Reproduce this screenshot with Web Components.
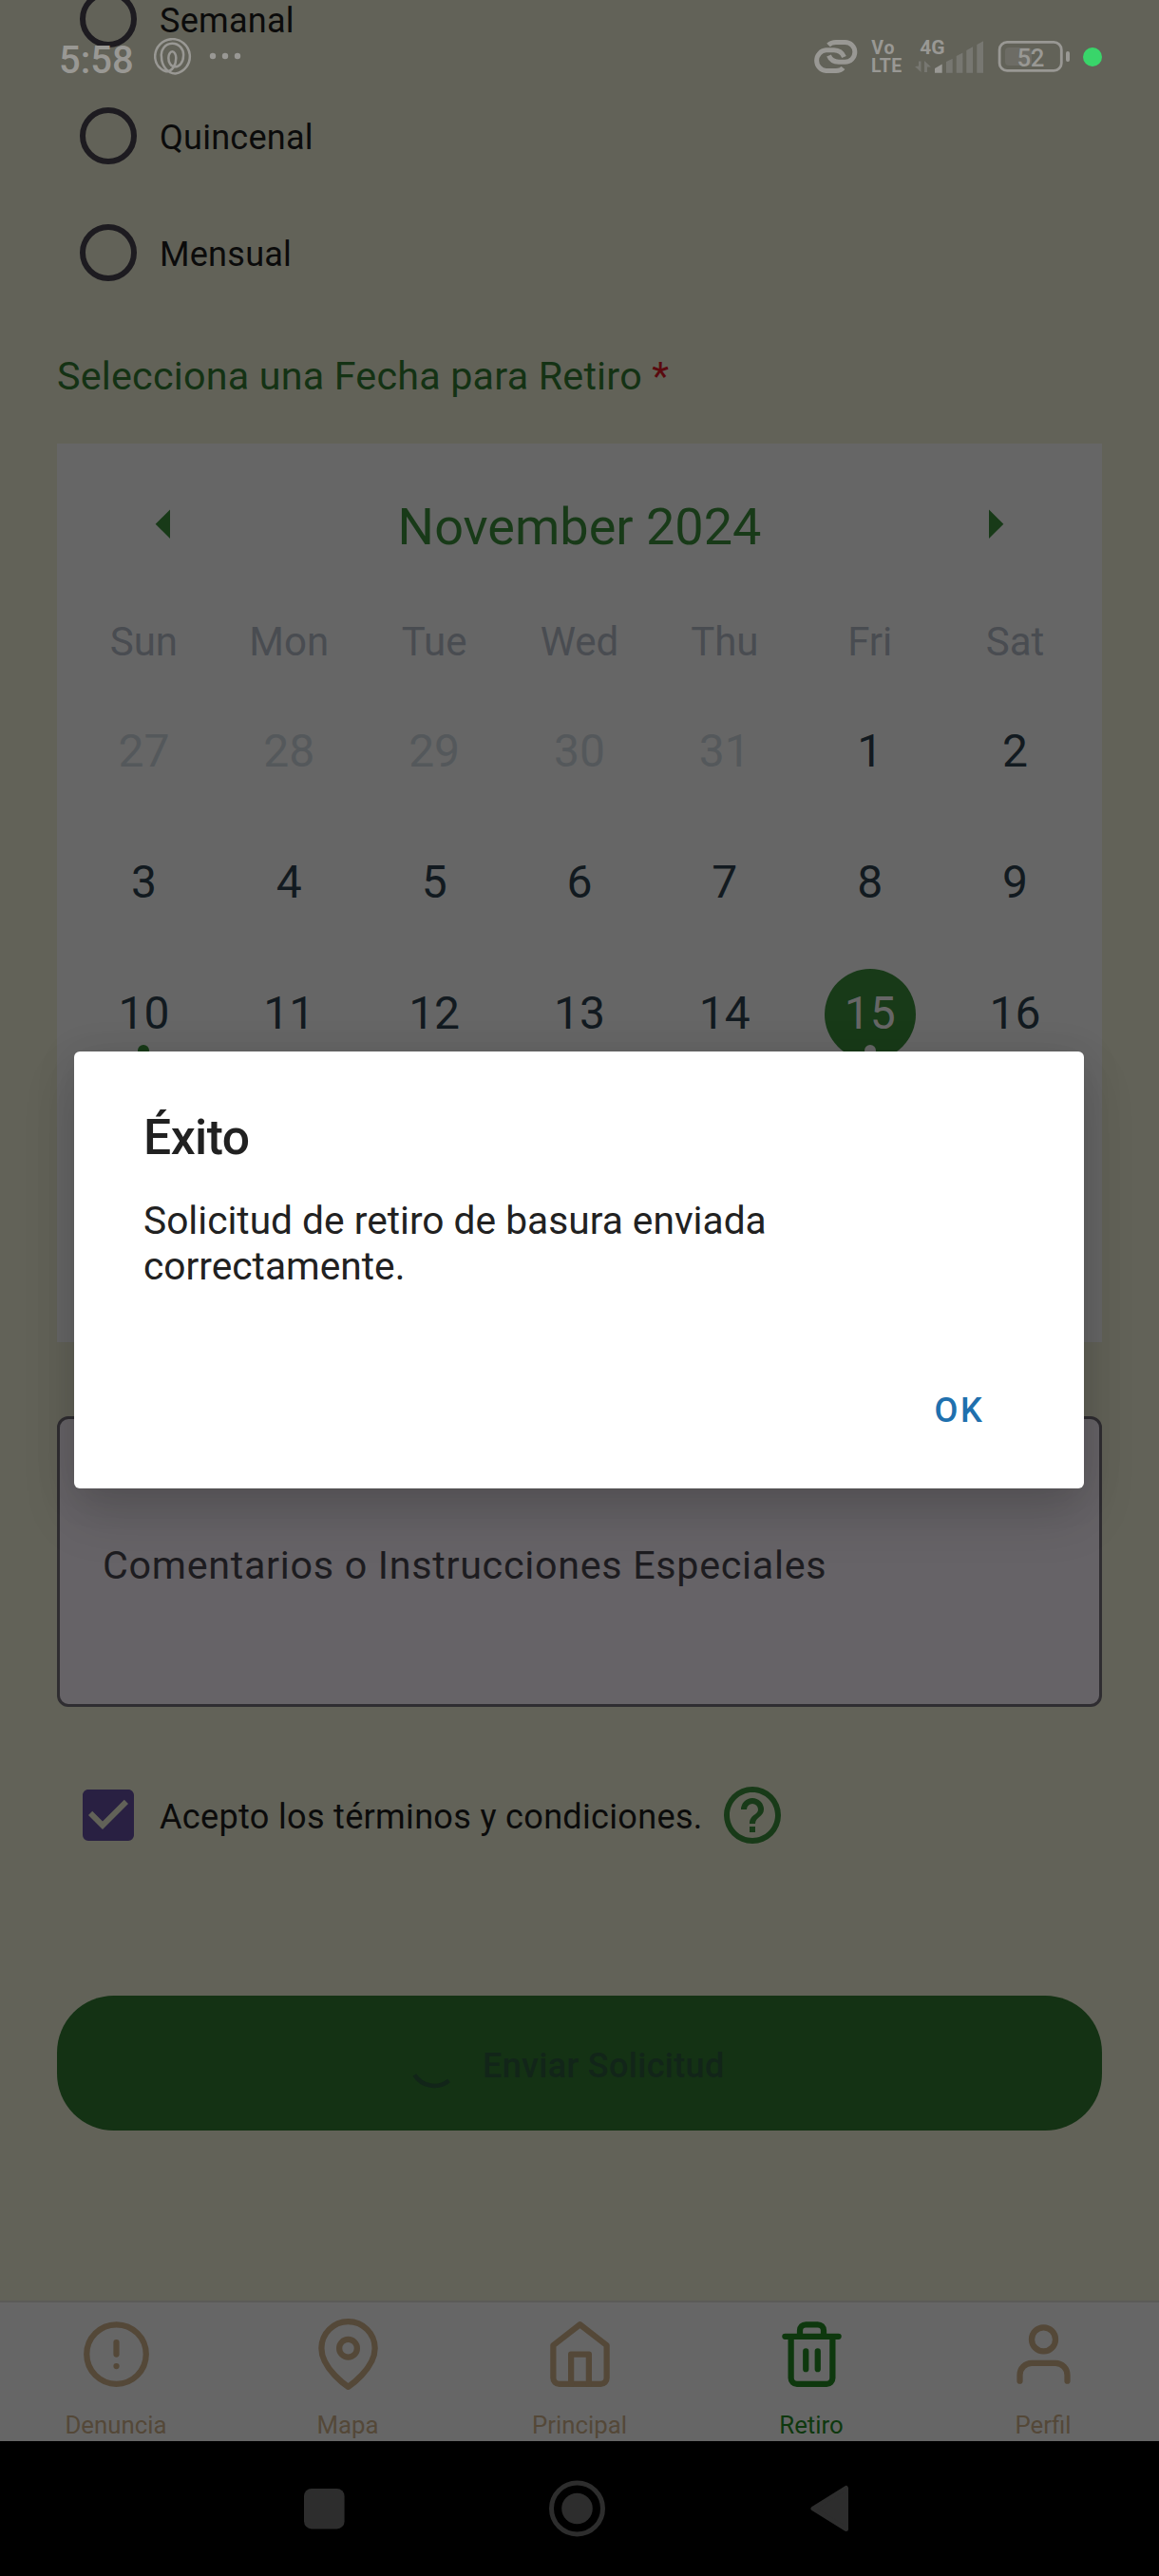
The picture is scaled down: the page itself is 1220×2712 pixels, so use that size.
<!DOCTYPE html>
<html lang="es">
<head>
<meta charset="utf-8">
<title>Retiro</title>
<style>
html,body{margin:0;padding:0}
body{width:1220px;height:2712px;overflow:hidden;background:#626258;font-family:Roboto,"Noto Sans",sans-serif}
</style>
</head>
<body>
<app-screen></app-screen>
<script>
const define = (name, css, html) => customElements.define(name, class extends HTMLElement {
  connectedCallback() {
    if (this.shadowRoot) return;
    const body = typeof html === 'function' ? html(this) : html;
    this.attachShadow({mode: 'open'}).innerHTML = `<style>*{box-sizing:border-box}svg{display:block;flex:none}${css}</style>${body}`;
  }
});

/* Frequency option */
define('radio-option', `
:host{display:flex;align-items:flex-start;height:123px;padding:31px 0 0 24px;color:#0b0b0b}
i{width:60px;height:60px;border:6px solid #1d1b20;border-radius:50%;flex:none}
span{margin:10px 0 0 24px;font-size:36.12px;line-height:44px;letter-spacing:.22px;white-space:nowrap}`,
`<i></i><span><slot></slot></span>`);

define('field-heading', `
:host{display:block;margin-top:43px;height:50px;line-height:50px;font-size:41.28px;letter-spacing:.2px;color:#143214;white-space:nowrap}
b{font-weight:400;color:#5a0a0f}`,
`<slot></slot> <b>*</b>`);

/* One calendar day */
define('cal-day', `
:host{display:flex;justify-content:center;height:96px;color:#121a20}
:host([out]){color:#54585b}
div{position:relative;width:96px;height:96px;border-radius:50%;font-size:48px;line-height:93px;text-align:center}
:host([selected]) div{background:#183a18;color:#666}
i{position:absolute;left:42px;top:80px;width:12px;height:12px;border-radius:50%;background:#183a18;display:none}
:host([dot]) i{display:block}
:host([selected]) i{background:#666}`,
`<div><slot></slot><i></i></div>`);

define('month-calendar', `
:host{display:block;margin-top:46px;height:946px;padding:0 15px;background:#666}
header{display:flex;justify-content:space-between;align-items:flex-start;padding:56px 88px 0;height:184px;color:#183a18}
header svg{margin-top:13px}
h2{margin:0;font-size:54px;line-height:64px;font-weight:400}
.g{display:grid;grid-template-columns:repeat(7,1fr)}
.w{font-size:42px;line-height:50px;text-align:center;color:#494c51}
.d{margin-top:43px;row-gap:42px}`,
() => {
  const names = ['Sun','Mon','Tue','Wed','Thu','Fri','Sat'];
  const days = [27,28,29,30,31,1,2,3,4,5,6,7,8,9,10,11,12,13,14,15,16];
  return `<header><svg width="17" height="32" viewBox="0 0 17 32"><path d="M16 .5V31L.7 15.8z" fill="currentColor"/></svg>
<h2>November 2024</h2>
<svg width="17" height="32" viewBox="0 0 17 32"><path d="M1 .5V31L16.3 15.8z" fill="currentColor"/></svg></header>
<div class="g">${names.map(n => `<span class="w">${n}</span>`).join('')}</div>
<div class="g d">${days.map(n => `<cal-day${n>20?' out':''}${n===15?' selected dot':''}${n===10?' dot':''}>${n}</cal-day>`).join('')}</div>`;
});

define('comment-box', `
:host{display:block;margin-top:78px;height:306px;padding:129px 45px 0;border:3px solid #2f2d31;border-radius:12px;background:#666367;color:#1d1c20;font-size:41.28px;line-height:50px;letter-spacing:.7px;white-space:nowrap}`,
`<slot></slot>`);

define('terms-row', `
:host{display:flex;align-items:flex-start;margin-top:78px;height:72px;padding-left:18px}
span{margin:16px 16px 0 18px;font-size:36.12px;line-height:44px;letter-spacing:.29px;color:#0b0b0b;white-space:nowrap}`,
`<svg width="72" height="72" viewBox="0 0 24 24"><path fill="#292042" d="M10,17L5,12L6.41,10.58L10,14.17L17.59,6.58L19,8M19,3H5C3.89,3 3,3.89 3,5V19A2,2 0 0,0 5,21H19A2,2 0 0,0 21,19V5C21,3.89 20.1,3 19,3Z"/></svg>
<span><slot></slot></span>
<svg width="72" height="72" viewBox="0 0 24 24"><path fill="#183a18" d="M11,18H13V16H11V18M12,2A10,10 0 0,0 2,12A10,10 0 0,0 12,22A10,10 0 0,0 22,12A10,10 0 0,0 12,2M12,20C7.59,20 4,16.41 4,12C4,7.59 7.59,4 12,4C16.41,4 20,7.59 20,12C20,16.41 16.41,20 12,20M12,6A4,4 0 0,0 8,10H10A2,2 0 0,1 12,8A2,2 0 0,1 14,10C14,12 11,11.75 11,15H13C13,12.75 16,12.5 16,10A4,4 0 0,0 12,6Z"/></svg>`);

define('submit-button', `
:host{display:flex;align-items:center;margin-top:154px;height:142px;padding-left:370px;border-radius:60px;background:#143214;color:#122519}
span{margin:5px 0 0 24px;font-size:36.12px;line-height:44px;font-weight:500;letter-spacing:.28px;white-space:nowrap}`,
`<svg width="54" height="54" viewBox="0 0 54 54"><path d="M6.400 39.500A24.500 24.500 0 0 0 42.500 45.500" fill="none" stroke="currentColor" stroke-width="4.600"/></svg><span><slot></slot></span>`);

/* Bottom tabs */
const tabIcons = {
  alert: '<circle cx="12" cy="12" r="10"/><path d="M12 8v4M12 16h.01"/>',
  pin: '<path d="M21 10c0 7-9 13-9 13s-9-6-9-13a9 9 0 0 1 18 0z"/><circle cx="12" cy="10" r="3"/>',
  home: '<path d="M3 9l9-7 9 7v11a2 2 0 0 1-2 2H5a2 2 0 0 1-2-2z"/><path d="M9 22V12h6v10"/>',
  trash: '<path d="M3 6h18M19 6v14a2 2 0 0 1-2 2H7a2 2 0 0 1-2-2V6m3 0V4a2 2 0 0 1 2-2h4a2 2 0 0 1 2 2v2M10 11v6M14 11v6"/>',
  user: '<path d="M20 21v-2a4 4 0 0 0-4-4H8a4 4 0 0 0-4 4v2"/><circle cx="12" cy="7" r="4"/>'
};
define('tab-item', `
:host{flex:1;display:flex;flex-direction:column;align-items:center;padding-top:17px;color:#544838}
:host([active]){color:#0e380e}
span{margin-top:22px;font-size:25.8px;line-height:30px}`,
el => `<svg width="75" height="75" viewBox="0 0 24 24" fill="none" stroke="currentColor" stroke-width="2" stroke-linecap="round" stroke-linejoin="round">${tabIcons[el.getAttribute('icon')]}</svg><span><slot></slot></span>`);
define('tab-bar', `:host{display:flex;height:148px;border-top:2px solid #5b5b58;background:#666;flex:none}`, `<slot></slot>`);

define('system-nav', `
:host{display:flex;height:142px;flex:none;background:#000;align-items:center;padding-left:320px;color:#2d2d2d}
svg+svg{margin-left:215px}`,
`<svg width="43" height="43" viewBox="0 0 43 43"><rect width="42.6" height="42.4" rx="8" fill="currentColor"/></svg>
<svg width="60" height="60" viewBox="0 0 60 60" fill="currentColor"><circle cx="29.5" cy="30" r="27" fill="none" stroke="currentColor" stroke-width="5"/><circle cx="29.5" cy="30" r="16.3"/></svg>
<svg width="42" height="50" viewBox="0 0 42 50"><path d="M3 25L37.500 3.500V46.500Z" fill="currentColor" stroke="currentColor" stroke-width="5" stroke-linejoin="round"/></svg>`);

define('status-bar', `
:host{position:absolute;left:0;top:0;width:1220px;height:120px;display:flex;align-items:center;color:#999894;padding-left:62px}
.t{font-size:40px;font-weight:500;line-height:48px;margin-top:7px;width:100px;white-space:nowrap}
.r{margin-left:auto}
text{font-family:Roboto,sans-serif;fill:currentColor}`,
`<span class="t">5:58</span>
<svg width="100" height="40" viewBox="162 40 100 40"><g transform="translate(150 30) scale(.3333)" fill="none" stroke="currentColor" stroke-width="7.500"><path d="M75 136C54 130 39.500 112 39.500 88A55 55 0 1 1 104 142.500C80 143 60 118 60 90A35 36 0 1 1 129 88C129 108 115 121 103 121C88 121 82 105 82 93A12 20 0 1 1 106 93C106 114 95 136 75 136Z"/></g><g fill="currentColor"><circle cx="224" cy="59" r="3.200"/><circle cx="237" cy="59" r="3.200"/><circle cx="250" cy="59" r="3.200"/></g></svg>
<svg class="r" width="364" height="60" viewBox="856 30 364 60">
<g fill="none" stroke="currentColor" stroke-width="5"><path d="M872 47.500Q875 44.500 880 44.500H889.500A10.300 10.300 0 0 1 889.500 65.200H883Q875 65 872.500 58.500"/><path d="M887.500 71.500Q885 74.500 880 74.500H869.500A10.900 10.900 0 0 1 869.500 52.800H878Q885.500 53 888.500 60"/></g>
<g font-weight="700"><text x="917.300" y="57.200" font-size="19.500" letter-spacing="1">Vo</text><text x="917" y="75.500" font-size="19.500" letter-spacing=".4">LTE</text><text x="968.200" y="57" font-size="21">4G</text></g>
<g fill="#777771"><path d="M963 70l6.500 6V64.500h-2.500v5zM973 76V64l7 6.500h-4V76z"/><path d="M996 76.700V65l6.700-3.300v15zM1006.700 76.700V59l6.700-3.500v21.200zM1017.300 76.700V53l6.700-3.700v27.400zM1028.300 76.700V47l6.700-3.700v33.400z"/></g>
<path d="M984 76.700V72l7.700-4.500v9.200z" fill="currentColor"/>
<rect x="1058" y="50" width="28" height="19" rx="4" fill="#6d6c65"/>
<rect x="1052.100" y="44.400" width="65.200" height="30" rx="8" fill="none" stroke="currentColor" stroke-width="2.800"/><rect x="1122" y="54" width="4" height="11" rx="2" fill="currentColor"/>
<text x="1070.600" y="70" font-size="25.800" font-weight="500" letter-spacing="-.5">52</text>
<circle cx="1150" cy="60" r="10" fill="#39d56a"/></svg>`);

define('alert-dialog', `
:host{position:absolute;left:78px;top:1107px;width:1063px;height:460px;padding:0 73px;background:#fff;border-radius:6px;color:#212121;display:flex;flex-direction:column;
box-shadow:0 28px 56px rgba(0,0,0,.14),0 6px 44px rgba(0,0,0,.1)}
h1{margin:60px 0 0;font-size:51.6px;line-height:62px;font-weight:500;letter-spacing:-.5px}
p{margin:32px 0 0;font-size:40.7px;line-height:48px;width:800px}
button{all:unset;align-self:flex-end;margin:106px 31.5px 0 0;font-size:36.12px;line-height:44px;font-weight:500;letter-spacing:2.6px;color:#2070ae}`,
`<h1>Éxito</h1><p><slot></slot></p><button>OK</button>`);

define('app-screen', `
:host{display:flex;flex-direction:column;position:relative;width:1220px;height:2712px;overflow:hidden;background:#626258}
main{height:2422px;flex:none;padding:0 60px;overflow:hidden}
.o{margin-top:-41px}`,
`<main>
<div class="o"><radio-option>Semanal</radio-option><radio-option>Quincenal</radio-option><radio-option>Mensual</radio-option></div>
<field-heading>Selecciona una Fecha para Retiro</field-heading>
<month-calendar></month-calendar>
<comment-box>Comentarios o Instrucciones Especiales</comment-box>
<terms-row>Acepto los términos y condiciones.</terms-row>
<submit-button>Enviar Solicitud</submit-button>
</main>
<tab-bar><tab-item icon="alert">Denuncia</tab-item><tab-item icon="pin">Mapa</tab-item><tab-item icon="home">Principal</tab-item><tab-item icon="trash" active>Retiro</tab-item><tab-item icon="user">Perfil</tab-item></tab-bar>
<system-nav></system-nav>
<status-bar></status-bar>
<alert-dialog>Solicitud de retiro de basura enviada correctamente.</alert-dialog>`);
</script>
</body>
</html>
